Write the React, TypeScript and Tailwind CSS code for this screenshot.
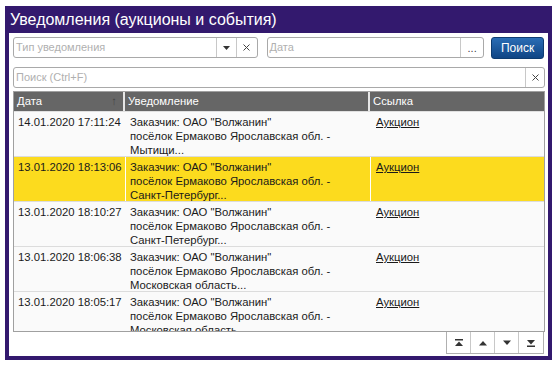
import React from 'react'

interface Row {
  date: string
  last: string
  selected?: boolean
}

const rows: Row[] = [
  { date: '14.01.2020 17:11:24', last: 'Мытищи...' },
  { date: '13.01.2020 18:13:06', last: 'Санкт-Петербург...', selected: true },
  { date: '13.01.2020 18:10:27', last: 'Санкт-Петербург...' },
  { date: '13.01.2020 18:06:38', last: 'Московская область...' },
  { date: '13.01.2020 18:05:17', last: 'Московская область...' },
]

function Tri({ dir, bar }: { dir: 'up' | 'down'; bar?: boolean }) {
  return (
    <svg width="10" height="8" viewBox="0 0 10 8" className="fill-[#333]">
      {dir === 'up' ? (
        <>
          {bar && <rect x="1" y="0" width="8" height="1.5" />}
          <path d={bar ? 'M1 7 L5 2.5 L9 7 Z' : 'M1 6.5 L5 2 L9 6.5 Z'} />
        </>
      ) : (
        <>
          <path d={bar ? 'M1 1 L5 5.5 L9 1 Z' : 'M1 1.5 L5 6 L9 1.5 Z'} />
          {bar && <rect x="1" y="6.5" width="8" height="1.5" />}
        </>
      )}
    </svg>
  )
}

function Cross() {
  return (
    <svg width="7" height="7" viewBox="0 0 7 7">
      <path d="M0.5 0.5 L6.5 6.5 M6.5 0.5 L0.5 6.5" stroke="#444" strokeWidth="1" />
    </svg>
  )
}

export default function App() {
  return (
    <div className="w-[559px] h-[370px] bg-white pt-[6px] pl-[5px] font-['Liberation_Sans',Arial,sans-serif]">
      <div className="w-[547px] h-[354px] bg-[#33196e] px-[4px] pb-[4px] flex flex-col">
        {/* Заголовок */}
        <div className="h-[27px] flex items-center pl-[1px] pt-[1px] text-white text-[16px] leading-none">
          Уведомления (аукционы и события)
        </div>

        <div className="flex-1 bg-white flex flex-col px-[4px] pt-[4px]">
          {/* Фильтры */}
          <div className="flex items-start h-[22px]">
            <div className="w-[245px] h-[21px] flex border border-[#a9a9a9] rounded-[3px] bg-white">
              <div className="flex-1 px-[2px] text-[11px] leading-[19px] text-[#b0b0b0]">Тип уведомления</div>
              <div className="w-[20px] border-l border-[#c8c8c8] flex items-center justify-center">
                <svg width="7" height="4" viewBox="0 0 7 4"><path d="M0 0 H7 L3.5 4 Z" fill="#333" /></svg>
              </div>
              <div className="w-[21px] border-l border-[#c8c8c8] flex items-center justify-center"><Cross /></div>
            </div>
            <div className="ml-[9px] w-[218px] h-[21px] flex border border-[#a9a9a9] rounded-[3px] bg-white">
              <div className="flex-1 px-[2px] text-[11px] leading-[19px] text-[#b0b0b0]">Дата</div>
              <div className="w-[23px] border-l border-[#c8c8c8] flex items-end justify-center pb-[3px] text-[11px] leading-none text-[#444]">...</div>
            </div>
            <button className="ml-[7px] w-[53px] h-[22px] rounded-[3px] border border-[#0d3b70] bg-gradient-to-b from-[#2a6db5] to-[#0f4585] text-white text-[12px] leading-none">
              Поиск
            </button>
          </div>

          {/* Поиск */}
          <div className="mt-[8px] w-[532px] h-[21px] flex border border-[#a9a9a9] rounded-[3px] bg-white">
            <div className="flex-1 px-[2px] text-[11px] leading-[19px] text-[#b0b0b0]">Поиск (Ctrl+F)</div>
            <div className="w-[19px] border-l border-[#c8c8c8] flex items-center justify-center"><Cross /></div>
          </div>

          {/* Таблица */}
          <div className="mt-[3px] w-[532px] h-[241px] border border-[#a0a0a0] overflow-hidden bg-[#fafafa] text-[11.3px] text-[#1a1a1a]">
            <div className="flex h-[20px] bg-[#666666] text-white leading-[19px] border-b border-[#e0e0e0]">
              <div className="w-[111px] px-[3px] flex justify-between border-r-2 border-[#e6e6e6]">
                <span>Дата</span>
                <span className="text-[#444] pr-[3px]">↑</span>
              </div>
              <div className="w-[245px] px-[3px] border-r-2 border-[#e6e6e6]">Уведомление</div>
              <div className="flex-1 px-[3px]">Ссылка</div>
            </div>
            {rows.map((r) => (
              <div
                key={r.date}
                className={`flex h-[45px] shrink-0 border-b border-[#dcdcdc] leading-[14px] whitespace-nowrap ${r.selected ? 'bg-[#fcdb1e]' : ''}`}
              >
                <div className={`w-[112px] pl-[4px] pt-[3px] ${r.selected ? 'border-r border-white' : ''}`}>{r.date}</div>
                <div className={`w-[245px] pl-[4px] pt-[3px] ${r.selected ? 'border-r border-white' : ''}`}>
                  <div>Заказчик: ОАО "Волжанин"</div>
                  <div>посёлок Ермаково Ярославская обл. -</div>
                  <div>{r.last}</div>
                </div>
                <div className="flex-1 pl-[5px] pt-[3px]">
                  <span className="underline">Аукцион</span>
                </div>
              </div>
            ))}
          </div>

          {/* Пагинация */}
          <div className="flex justify-end w-[532px] pr-[1px]">
            <div className="flex border border-t-0 border-[#b0b0b0] bg-white">
              <div className="w-[24px] h-[21px] flex items-center justify-center border-r border-[#c8c8c8]"><Tri dir="up" bar /></div>
              <div className="w-[24px] h-[21px] flex items-center justify-center border-r border-[#c8c8c8]"><Tri dir="up" /></div>
              <div className="w-[24px] h-[21px] flex items-center justify-center border-r border-[#c8c8c8]"><Tri dir="down" /></div>
              <div className="w-[24px] h-[21px] flex items-center justify-center"><Tri dir="down" bar /></div>
            </div>
          </div>
        </div>
      </div>
    </div>
  )
}
